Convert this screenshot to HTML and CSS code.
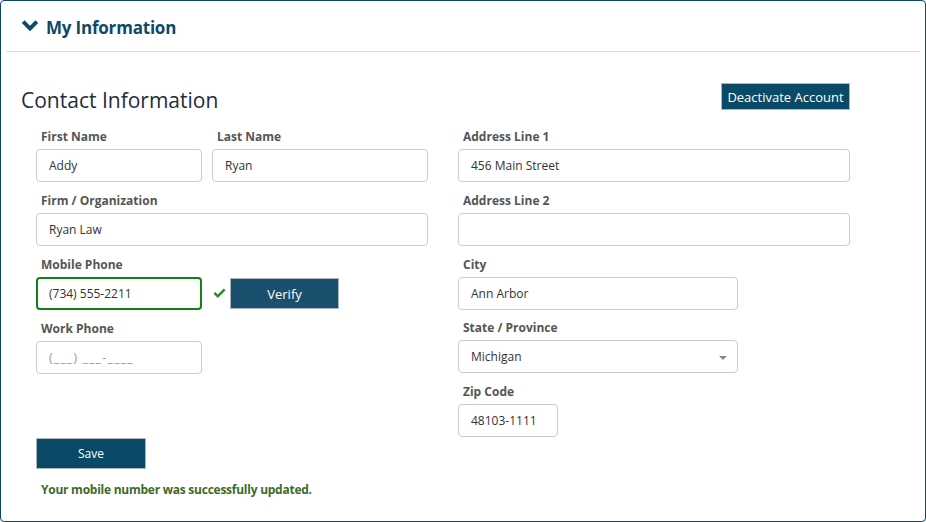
FILE: index.html
```html
<!DOCTYPE html>
<html>
<head>
<meta charset="utf-8">
<link rel="stylesheet" href="styles.css">
</head>
<body>
<div class="panel">
  <div class="panel-head">
    <svg class="chev" width="18" height="13" viewBox="0 0 18 13"><path d="M0.8 3 L3.5 0.3 L9 5.8 L14.5 0.3 L17.2 3 L9 11.2 Z" fill="#0b4a66"/></svg>
    <h2 class="panel-title">My Information</h2>
  </div>
  <div class="panel-body">
    <div class="title-row">
      <h3 class="section-title">Contact Information</h3>
      <button class="btn btn-deactivate">Deactivate Account</button>
    </div>
    <div class="cols">
      <div class="col">
        <div class="row">
          <div class="field w-first">
            <label class="lbl">First Name</label>
            <div class="input">Addy</div>
          </div>
          <div class="field w-last">
            <label class="lbl">Last Name</label>
            <div class="input">Ryan</div>
          </div>
        </div>
        <div class="field">
          <label class="lbl">Firm / Organization</label>
          <div class="input">Ryan Law</div>
        </div>
        <div class="field">
          <label class="lbl">Mobile Phone</label>
          <div class="row align-center">
            <div class="input input-ok w-first">(734) 555-2211</div>
            <svg class="check" width="13" height="11" viewBox="0 0 13 11"><path d="M0.5 5.8 L2.3 4 L4.8 6.5 L10.8 0.5 L12.6 2.3 L4.8 10.1 Z" fill="#2e8b2e"/></svg>
            <button class="btn btn-verify">Verify</button>
          </div>
        </div>
        <div class="field">
          <label class="lbl">Work Phone</label>
          <div class="input input-placeholder w-first">(___) ___-____</div>
        </div>
      </div>
      <div class="col col-right">
        <div class="field">
          <label class="lbl">Address Line 1</label>
          <div class="input">456 Main Street</div>
        </div>
        <div class="field">
          <label class="lbl">Address Line 2</label>
          <div class="input"></div>
        </div>
        <div class="field">
          <label class="lbl">City</label>
          <div class="input w-city">Ann Arbor</div>
        </div>
        <div class="field">
          <label class="lbl">State / Province</label>
          <div class="input select w-city">Michigan<span class="caret"></span></div>
        </div>
        <div class="field">
          <label class="lbl">Zip Code</label>
          <div class="input w-zip">48103-1111</div>
        </div>
      </div>
    </div>
    <button class="btn btn-save">Save</button>
    <p class="msg">Your mobile number was successfully updated.</p>
  </div>
</div>
</body>
</html>
```
FILE: styles.css
```css
* { box-sizing: border-box; }
html, body { margin: 0; padding: 0; background: #fff; }
body { font-family: "Open Sans", "Noto Sans", sans-serif; color: #333; }

.panel {
  width: 926px;
  height: 522px;
  border: 1px solid #0b4a66;
  border-radius: 4px;
  padding: 0 5px;
}
.panel-head {
  display: flex;
  align-items: center;
  height: 51px;
  padding-left: 15px;
  border-bottom: 1px solid #ddd;
  padding-top: 3px;
}
.chev { margin-right: 7px; margin-top: -2px; }
.panel-title {
  margin: 0;
  font-size: 17px;
  font-weight: 700;
  color: #0e4a68;
  letter-spacing: -0.2px;
}
.panel-body { padding: 31px 0 0 15px; }

.title-row {
  display: flex;
  justify-content: space-between;
  align-items: center;
  width: 829px;
  height: 27px;
}
.section-title {
  margin: 0;
  font-size: 21px;
  font-weight: 400;
  color: #1f2d3d;
  margin-top: 7px;
}
.btn {
  font-family: inherit;
  border: 1px solid #a9b8c2;
  color: #fff;
  cursor: pointer;
  padding: 0;
}
.btn-deactivate {
  background: #0b4a66;
  font-size: 13px;
  height: 27px;
  width: 129px;
  border-color: #b0b8bf;
}
.cols {
  display: flex;
  gap: 30px;
  padding-left: 15px;
  margin-top: 17px;
}
.col { width: 392px; display: flex; flex-direction: column; }
.row { display: flex; gap: 10px; }
.align-center { align-items: center; gap: 0; }
.field { margin-bottom: 9px; display: flex; flex-direction: column; }
.col-right .field { margin-bottom: 8.75px; }
.lbl {
  display: block;
  font-size: 12px;
  font-weight: 700;
  color: #555;
  line-height: 20px;
  padding-left: 5px;
  margin-bottom: 2px;
}
.input {
  height: 33px;
  border: 1px solid #ccc;
  border-radius: 4px;
  padding: 0 12px;
  font-size: 12px;
  line-height: 31px;
  color: #333;
  background: #fff;
  position: relative;
}
.w-first { width: 166px; }
.w-last { width: 216px; }
.w-city { width: 280px; }
.w-zip { width: 100px; }
.input-ok { border: 2px solid #138013; padding-left: 11px; line-height: 29px; }
.input-placeholder { color: #999; letter-spacing: 1.3px; }
.check { margin-left: 11px; margin-right: 4px; }
.btn-verify {
  background: #1b4f6e;
  width: 109px;
  height: 31px;
  font-size: 13px;
  border-color: #a9b3ba;
}
.caret {
  position: absolute;
  right: 10px;
  top: 15px;
  width: 0; height: 0;
  border-left: 4px solid transparent;
  border-right: 4px solid transparent;
  border-top: 4px solid #888;
}
.btn-save {
  display: block;
  background: #0b4a66;
  width: 110px;
  height: 31px;
  font-size: 12px;
  margin-left: 15px;
  margin-top: -7.75px;
  border-color: #a9b8c2;
}
.msg {
  margin: 12px 0 0 20px;
  font-size: 12px;
  font-weight: 700;
  color: #3c6b2a;
  letter-spacing: -0.25px;
}
```
